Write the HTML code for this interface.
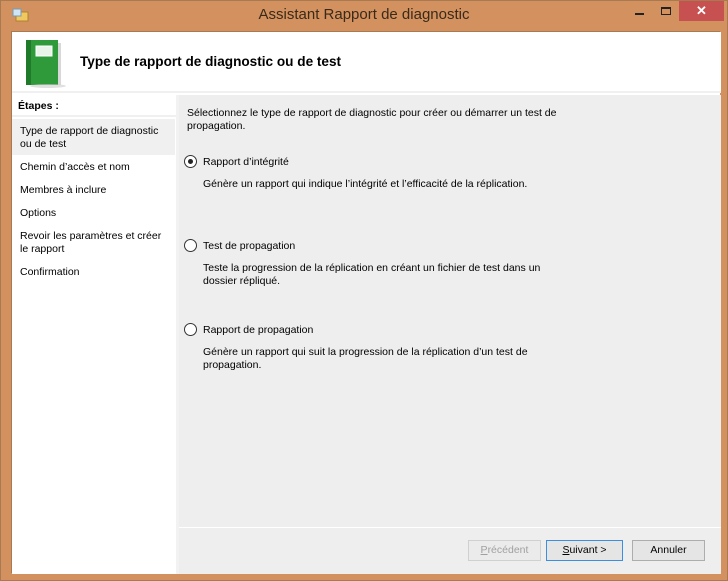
<!DOCTYPE html>
<html><head><meta charset="utf-8"><style>
*{margin:0;padding:0;box-sizing:border-box}
body{width:728px;height:581px;background:#d2915f;position:relative;overflow:hidden;font-family:"Liberation Sans",sans-serif;font-size:10.5px;color:#000}
.frame{position:absolute;left:0;top:0;width:728px;height:581px;border:1px solid #a77a52}
.title{position:absolute;top:6px;left:0;width:728px;text-align:center;font-size:15px;color:#3a2a1a}
.client{position:absolute;left:11px;top:31px;width:709px;height:542px;background:#fff;border-left:1px solid #a77a52;border-top:1px solid #a77a52}
.hdr{position:absolute;left:0;top:0;width:709px;height:61px;background:#fff;border-bottom:2px solid #f0f0f0}
.hdr h1{position:absolute;left:68px;top:22px;font-size:13.6px;font-weight:bold}
.left{position:absolute;left:0;top:63px;width:164px;height:479px;background:#fff}
.gap{position:absolute;left:164px;top:63px;width:3px;height:479px;background:#f2f2f2}
.right{position:absolute;left:167px;top:63px;width:542px;height:479px;background:#eeeeee}
.t{position:absolute;white-space:nowrap;line-height:13px}
.rb{position:absolute;width:13px;height:13px;border:1px solid #333;border-radius:50%;background:#fff}
.btn{position:absolute;top:508px;height:21px;border:1px solid #adadad;background:#e5e5e5;text-align:center;line-height:19px;font-size:10.5px}
</style></head><body>
<div class="frame"></div>
<svg style="position:absolute;left:12px;top:7px" width="18" height="16"><rect x="4" y="5" width="12" height="9" fill="#f0c860" stroke="#b08030"/><rect x="1" y="2" width="8" height="7" fill="#cfe4f4" stroke="#7a9ab0"/></svg>
<div class="title">Assistant Rapport de diagnostic</div>
<div style="position:absolute;left:635px;top:13px;width:9px;height:2px;background:#222"></div>
<div style="position:absolute;left:661px;top:7px;width:10px;height:8px;border:1px solid #222;border-top-width:2px"></div>
<div style="position:absolute;left:679px;top:1px;width:45px;height:20px;background:#c75050;color:#fff;text-align:center;font-size:13px;font-weight:bold;line-height:20px">✕</div>
<div class="client">
 <div class="hdr">
  <svg style="position:absolute;left:8px;top:5px" width="50" height="52"><rect x="6" y="3" width="32" height="45" fill="#2f9a3a"/><rect x="6" y="3" width="5" height="45" fill="#1f7a2a"/><rect x="38" y="6" width="3" height="42" fill="#d8d8d8"/><rect x="16" y="9" width="16" height="10" fill="#e8f4e8" stroke="#fff"/><ellipse cx="28" cy="49" rx="18" ry="2" fill="#ccc" opacity=".6"/></svg>
  <h1>Type de rapport de diagnostic ou de test</h1>
 </div>
 <div class="left">
  <div style="position:absolute;left:0;top:0;width:164px;height:22px;border-bottom:2px solid #f0f0f0"></div>
  <div class="t" style="left:6px;top:5px;font-weight:bold">Étapes :</div>
  <div style="position:absolute;left:0;top:24px;width:163px;height:36px;background:#f0f0f0"></div>
  <div class="t" style="left:8px;top:30px">Type de rapport de diagnostic<br>ou de test</div>
  <div class="t" style="left:8px;top:66px">Chemin d’accès et nom</div>
  <div class="t" style="left:8px;top:89px">Membres à inclure</div>
  <div class="t" style="left:8px;top:112px">Options</div>
  <div class="t" style="left:8px;top:135px">Revoir les paramètres et créer<br>le rapport</div>
  <div class="t" style="left:8px;top:171px">Confirmation</div>
 </div>
 <div class="gap"></div>
 <div class="right">
  <div class="t" style="left:8px;top:12px">Sélectionnez le type de rapport de diagnostic pour créer ou démarrer un test de<br>propagation.</div>
  <div class="rb" style="left:5px;top:60px"><div style="position:absolute;left:3px;top:3px;width:5px;height:5px;border-radius:50%;background:#222"></div></div>
  <div class="t" style="left:24px;top:61px">Rapport d’intégrité</div>
  <div class="t" style="left:24px;top:83px">Génère un rapport qui indique l’intégrité et l’efficacité de la réplication.</div>
  <div class="rb" style="left:5px;top:144px"></div>
  <div class="t" style="left:24px;top:145px">Test de propagation</div>
  <div class="t" style="left:24px;top:167px">Teste la progression de la réplication en créant un fichier de test dans un<br>dossier répliqué.</div>
  <div class="rb" style="left:5px;top:228px"></div>
  <div class="t" style="left:24px;top:229px">Rapport de propagation</div>
  <div class="t" style="left:24px;top:251px">Génère un rapport qui suit la progression de la réplication d’un test de<br>propagation.</div>
  <div style="position:absolute;left:0;top:432px;width:542px;height:1px;background:#fff"></div>
 </div>
 <div class="btn" style="left:456px;width:73px;color:#a0a0a0;border-color:#d0d0d0;background:#ebebeb"><u>P</u>récédent</div>
 <div class="btn" style="left:534px;width:77px;border-color:#3c8ee0"><u>S</u>uivant &gt;</div>
 <div class="btn" style="left:620px;width:73px">Annuler</div>
</div>
</body></html>
